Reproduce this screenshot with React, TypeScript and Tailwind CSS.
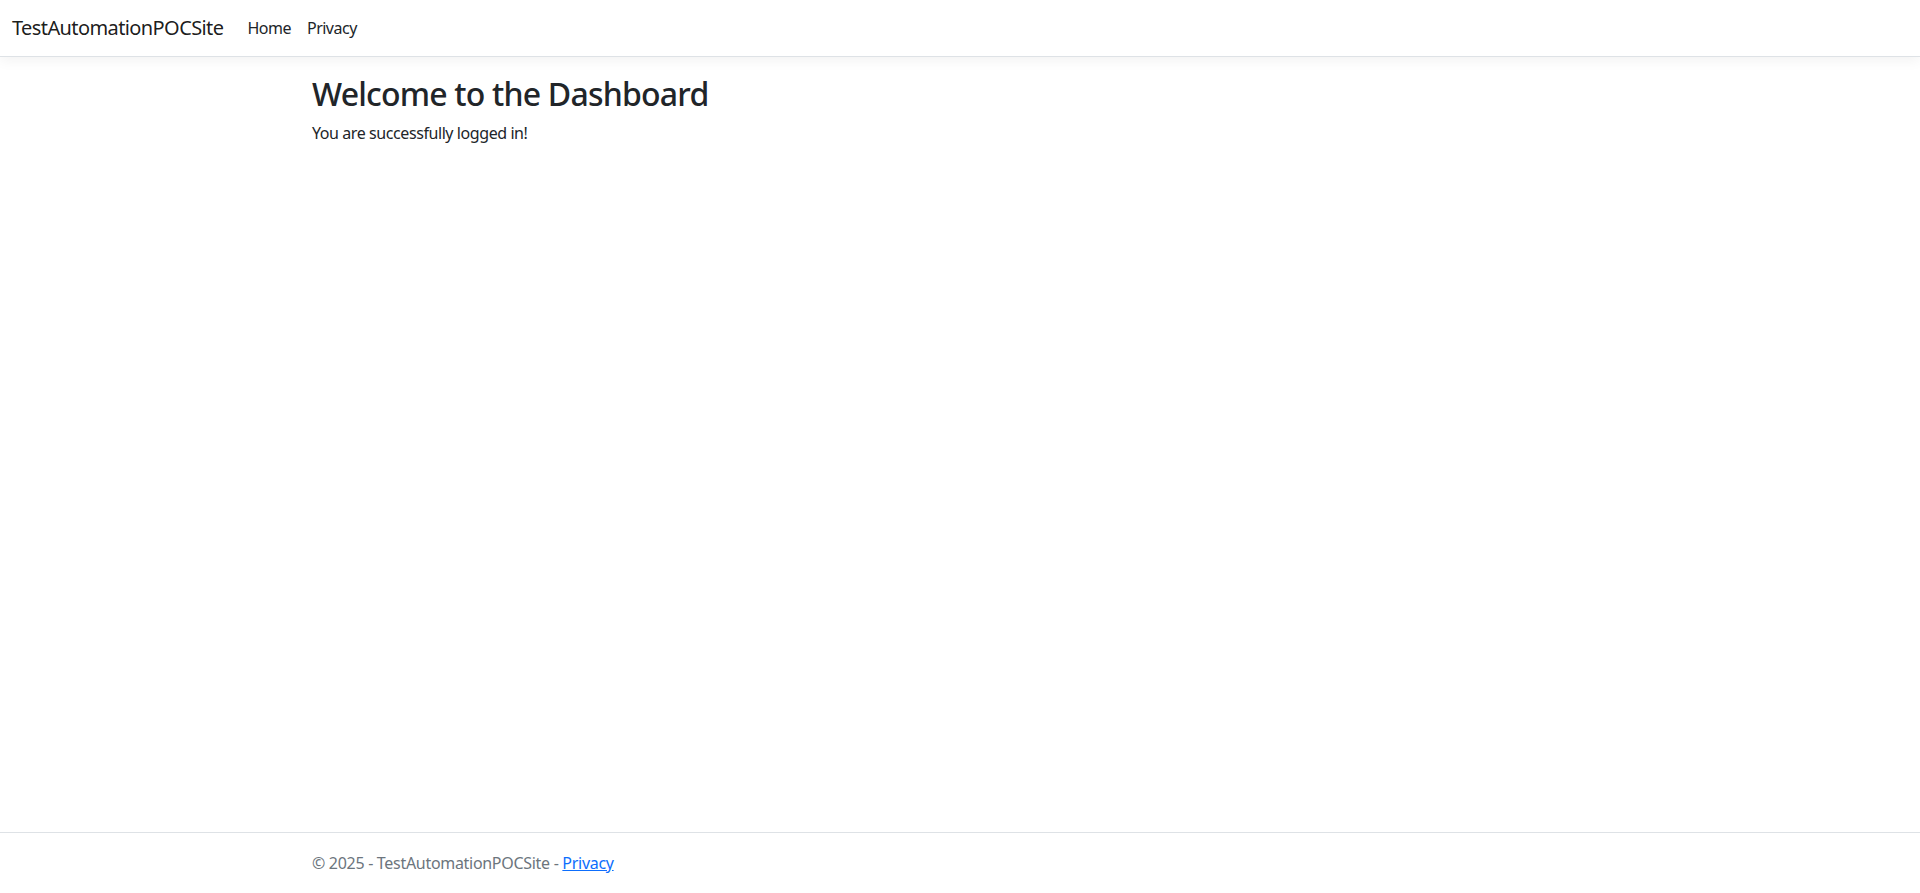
import React from 'react';

const font = { fontFamily: '"Noto Sans", "Open Sans", sans-serif' };

function NavBar() {
  return (
    <header>
      <nav className="mb-4 border-b border-[#dee2e6] bg-white shadow-[0_4px_12px_rgba(0,0,0,0.05)]">
        <div className="flex items-center px-3 py-2">
          <a href="#" className="mr-4 py-[5px] text-[20px] leading-[30px] tracking-[-0.6px] text-[rgba(0,0,0,0.9)]">
            TestAutomationPOCSite
          </a>
          <ul className="flex">
            <li>
              <a href="#" className="block px-2 py-2 text-[16px] leading-6 tracking-[-0.5px] text-[#212529]">
                Home
              </a>
            </li>
            <li>
              <a href="#" className="block px-2 py-2 text-[16px] leading-6 tracking-[-0.5px] text-[#212529]">
                Privacy
              </a>
            </li>
          </ul>
        </div>
      </nav>
    </header>
  );
}

export default function App() {
  return (
    <div className="flex min-h-screen flex-col bg-white text-[#212529]" style={font}>
      <NavBar />
      <div className="mx-auto w-full max-w-[1320px] flex-1 px-3">
        <main className="pb-4 pt-[2px]">
          <h2 className="mb-2 text-[32px] font-medium leading-[1.2] tracking-[-0.8px]">Welcome to the Dashboard</h2>
          <p className="text-[16px] leading-6 tracking-[-0.42px]">You are successfully logged in!</p>
        </main>
      </div>
      <footer className="border-t border-[#dee2e6] text-[#6c757d]">
        <div className="mx-auto w-full max-w-[1320px] whitespace-nowrap px-3 text-[16px] leading-[60px] tracking-[-0.3px]">
          &copy; 2025 - TestAutomationPOCSite -{' '}
          <a href="#" className="text-[#0d6efd] underline">
            Privacy
          </a>
        </div>
      </footer>
    </div>
  );
}
